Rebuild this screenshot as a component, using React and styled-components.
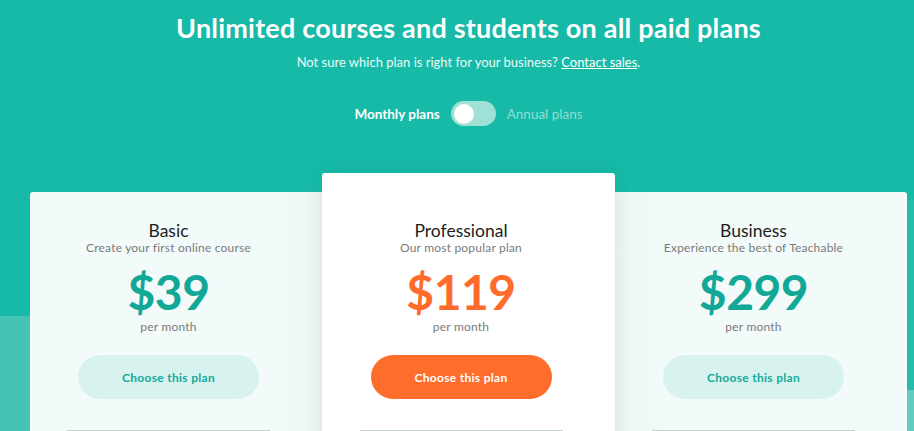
import React from 'react';
import styled, { createGlobalStyle } from 'styled-components';

const GlobalStyle = createGlobalStyle`
  html, body {
    margin: 0;
    padding: 0;
  }
  body {
    font-family: Lato, "Noto Sans", sans-serif;
    background: #17b9a7;
    overflow: hidden;
  }
`;

const Page = styled.div`
  position: relative;
  width: 914px;
  height: 431px;
  overflow: hidden;
  background: #17b9a7;
`;

const WaveLeft = styled.div`
  position: absolute;
  left: 0;
  top: 316px;
  width: 40px;
  height: 200px;
  background: #45c3b4;
`;

const WaveRight = styled.div`
  position: absolute;
  right: 0;
  top: 200px;
  width: 20px;
  height: 240px;
  background: linear-gradient(#26bbaa 0, #26bbaa 190px, #62cbbf 190px);
`;

const Header = styled.header`
  position: relative;
  display: flex;
  flex-direction: column;
  align-items: center;
  padding: 11px 0 0 23px;
  color: #fff;
`;

const Title = styled.h1`
  margin: 0;
  font-size: 27px;
  font-weight: 700;
  letter-spacing: 0.2px;
  line-height: 34px;
`;

const Sub = styled.p`
  margin: 8px 0 0;
  font-size: 13px;
  line-height: 18px;
  color: #eafaf7;

  a {
    color: #fff;
    text-decoration: underline;
  }
`;

const ToggleRow = styled.div`
  display: flex;
  align-items: center;
  gap: 11px;
  margin-top: 30px;
  font-size: 13.5px;
`;

const ToggleLabel = styled.span`
  font-weight: ${p => (p.active ? 700 : 400)};
  color: ${p => (p.active ? '#fff' : '#8fded4')};
`;

const Switch = styled.div`
  position: relative;
  width: 45px;
  height: 25px;
  border-radius: 13px;
  background: #9fe0d7;
`;

const Knob = styled.div`
  position: absolute;
  left: 3px;
  top: 2.5px;
  width: 20px;
  height: 20px;
  border-radius: 50%;
  background: #fff;
`;

const Cards = styled.div`
  position: relative;
  display: grid;
  grid-template-columns: 292px 293px 292px;
  align-items: start;
  margin: 47px 0 0 30px;
`;

const Card = styled.div`
  position: relative;
  z-index: ${p => (p.featured ? 2 : 1)};
  margin-top: ${p => (p.featured ? 0 : 19)}px;
  height: ${p => (p.featured ? 300 : 280)}px;
  padding: ${p => (p.featured ? 47 : 28)}px 15px 0 0;
  box-sizing: border-box;
  display: flex;
  flex-direction: column;
  align-items: center;
  background: ${p =>
    p.featured
      ? '#fff'
      : p.side === 'left'
      ? 'linear-gradient(90deg, #f2fafa 0, #f2fafa 82%, #ecf3f3 100%)'
      : 'linear-gradient(270deg, #f2fafa 0, #f2fafa 82%, #ecf3f3 100%)'};
  border-radius: ${p =>
    p.featured ? '3px 3px 0 0' : p.side === 'left' ? '3px 0 0 0' : '0 3px 0 0'};
  box-shadow: ${p => (p.featured ? '0 0 18px rgba(0, 60, 55, 0.08)' : 'none')};
`;

const PlanName = styled.h2`
  margin: 0;
  font-size: 17.5px;
  font-weight: 400;
  color: #1d1d1d;
  line-height: 22px;
`;

const PlanNote = styled.p`
  margin: -1px 0 0;
  font-size: 12px;
  color: #7b7b7b;
  letter-spacing: 0.2px;
  line-height: 14px;
`;

const Price = styled.div`
  margin-top: 11px;
  font-size: 48px;
  font-weight: 700;
  line-height: 52px;
  letter-spacing: -0.5px;
  color: ${p => p.color};
`;

const Per = styled.div`
  margin-top: 2px;
  font-size: 12px;
  color: #7b7b7b;
  letter-spacing: 0.2px;
  line-height: 14px;
`;

const Button = styled.button`
  margin-top: 21px;
  width: 181px;
  height: 44px;
  border: none;
  border-radius: 22px;
  font-family: inherit;
  font-size: 12px;
  font-weight: 700;
  letter-spacing: 0.3px;
  cursor: pointer;
  background: ${p => (p.primary ? '#ff6d2d' : '#d8f3ef')};
  color: ${p => (p.primary ? '#fff' : '#14a999')};
`;

const Rule = styled.div`
  margin-top: 31px;
  width: 203px;
  height: 1px;
  background: #c7cfcf;
`;

const plans = [
  { name: 'Basic', note: 'Create your first online course', price: '$39', side: 'left' },
  { name: 'Professional', note: 'Our most popular plan', price: '$119', featured: true },
  { name: 'Business', note: 'Experience the best of Teachable', price: '$299', side: 'right' },
];

export default function App() {
  return (
    <Page>
      <GlobalStyle />
      <WaveLeft />
      <WaveRight />
      <Header>
        <Title>Unlimited courses and students on all paid plans</Title>
        <Sub>
          Not sure which plan is right for your business? <a href="#">Contact sales</a>.
        </Sub>
        <ToggleRow>
          <ToggleLabel active>Monthly plans</ToggleLabel>
          <Switch>
            <Knob />
          </Switch>
          <ToggleLabel>Annual plans</ToggleLabel>
        </ToggleRow>
      </Header>
      <Cards>
        {plans.map(plan => (
          <Card key={plan.name} featured={plan.featured} side={plan.side}>
            <PlanName>{plan.name}</PlanName>
            <PlanNote>{plan.note}</PlanNote>
            <Price color={plan.featured ? '#ff6b2c' : '#12a897'}>{plan.price}</Price>
            <Per>per month</Per>
            <Button primary={plan.featured}>Choose this plan</Button>
            <Rule />
          </Card>
        ))}
      </Cards>
    </Page>
  );
}
